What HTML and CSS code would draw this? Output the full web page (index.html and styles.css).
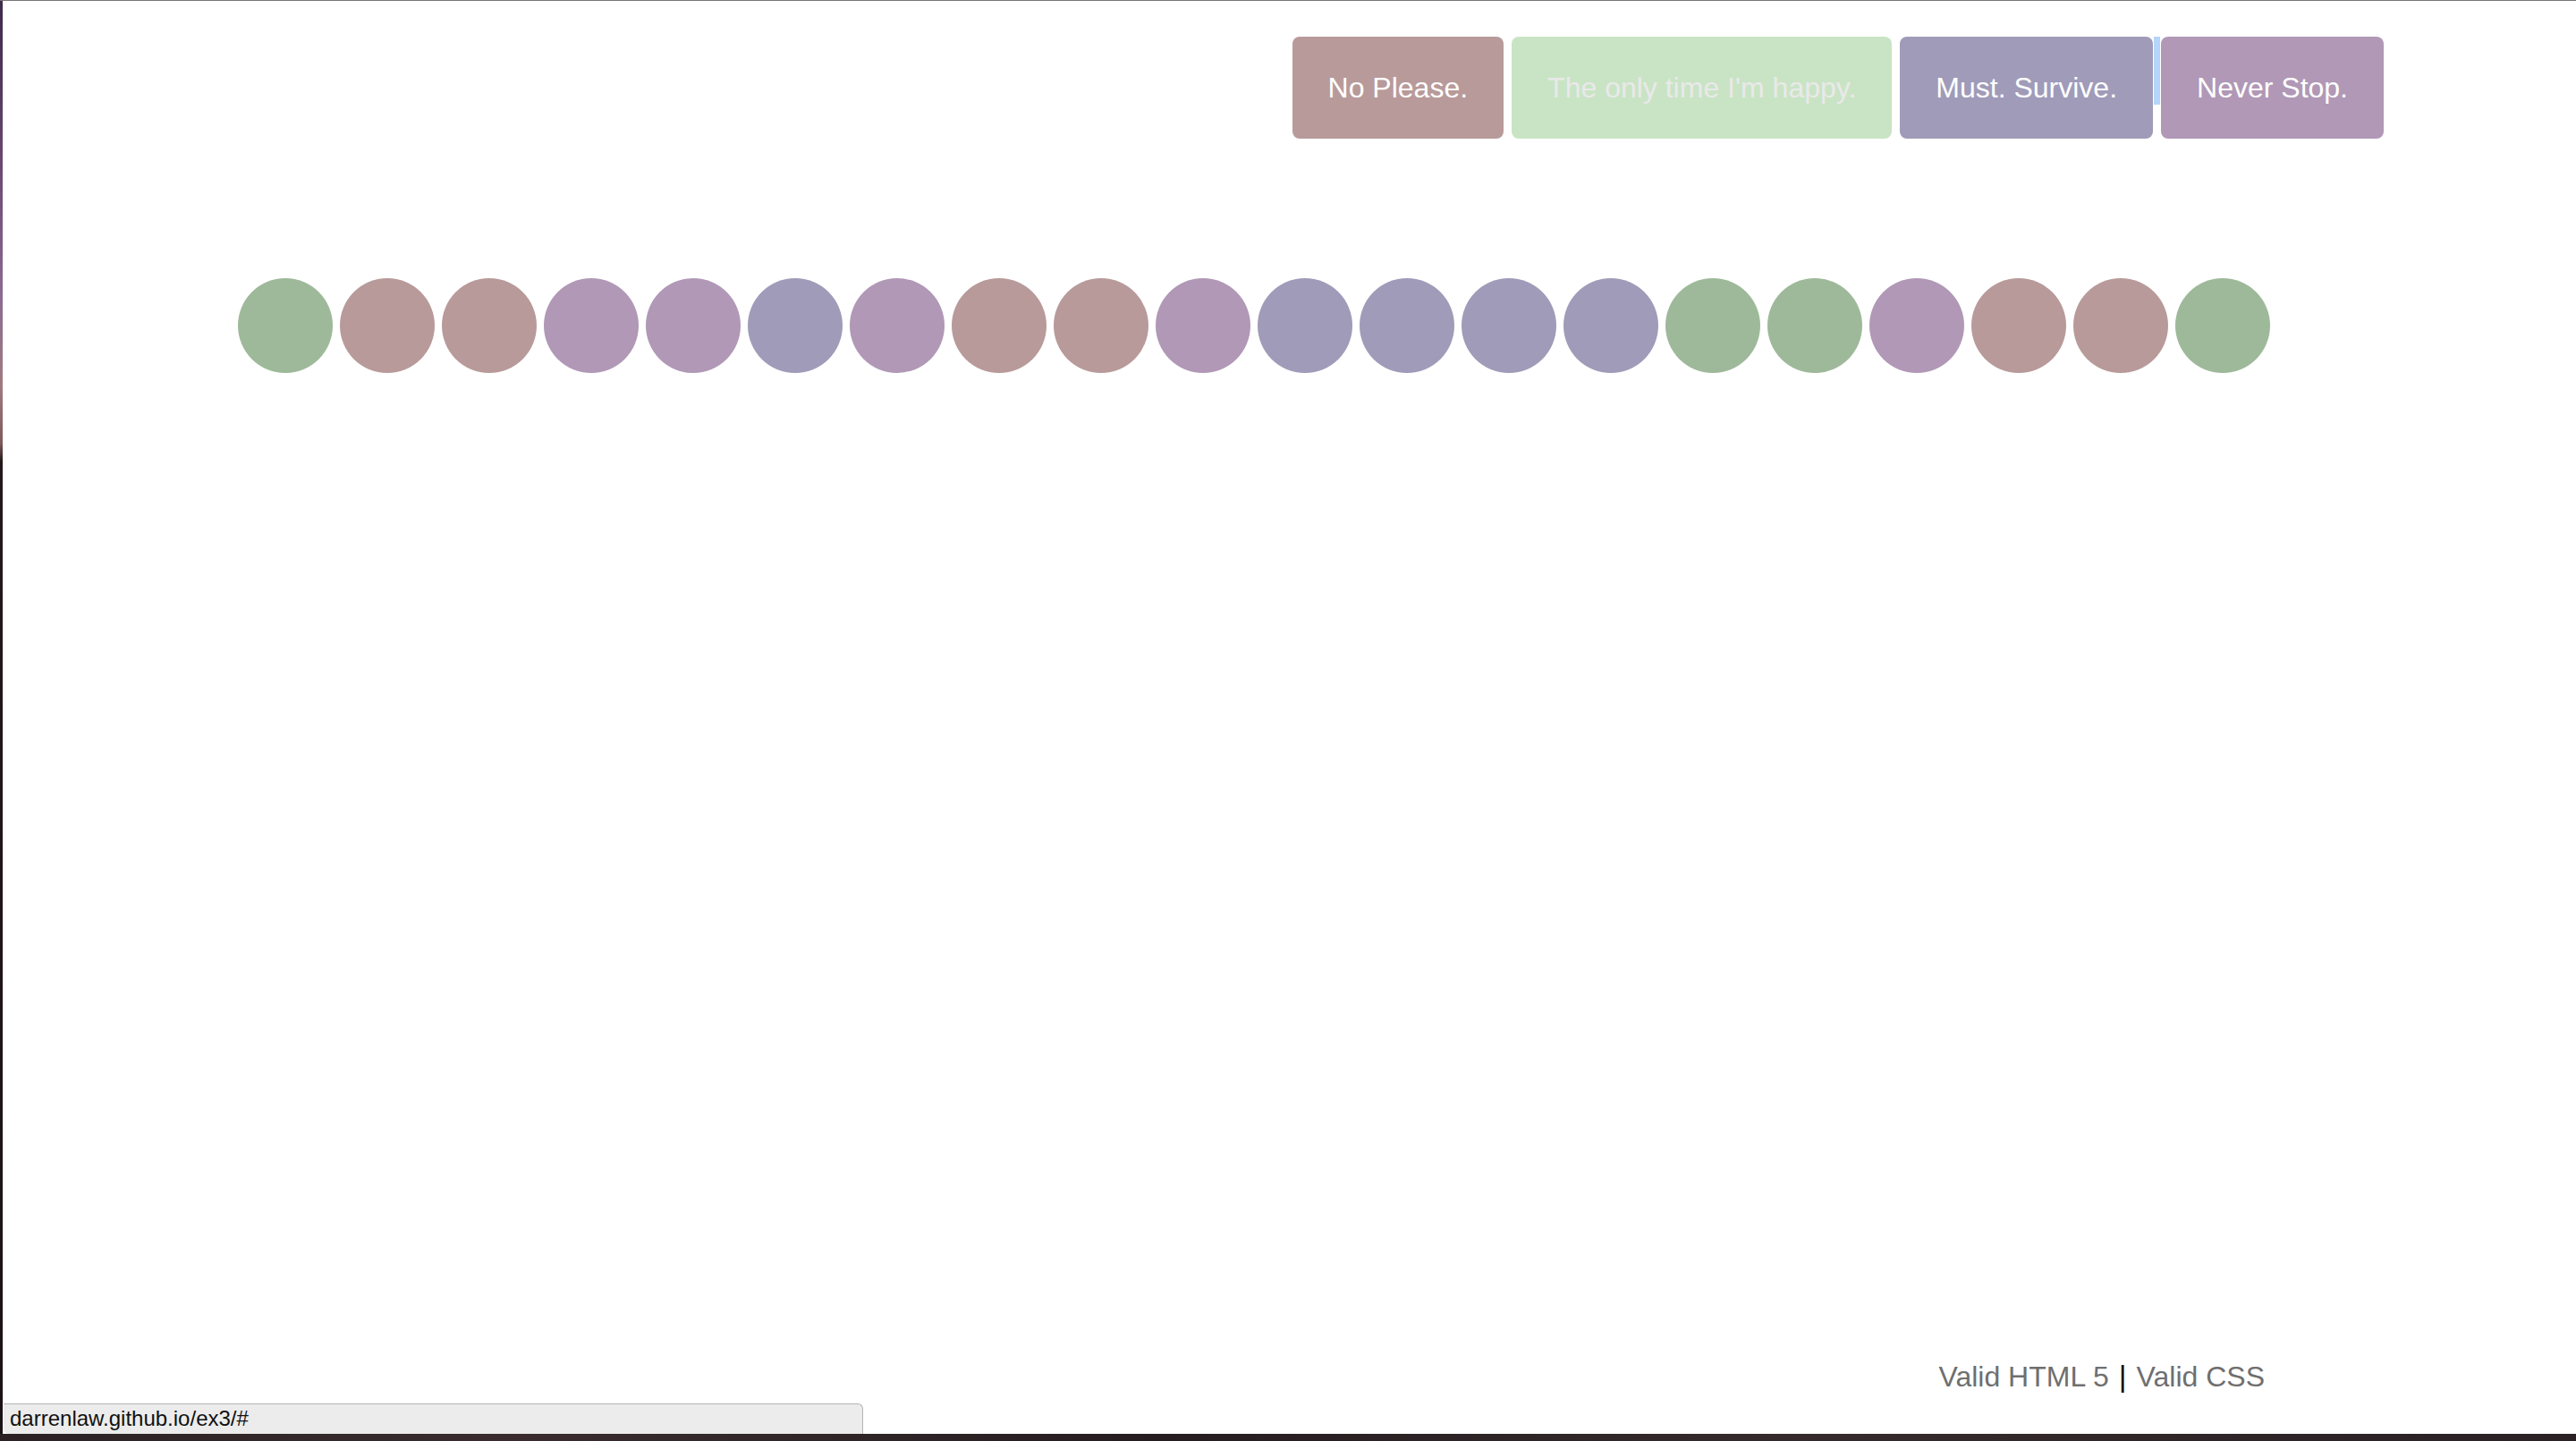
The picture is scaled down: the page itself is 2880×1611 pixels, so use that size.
FILE: index.html
```html
<!DOCTYPE html>
<html lang="en">
<head>
<meta charset="utf-8">
<title>ex3</title>
<link rel="stylesheet" href="styles.css">
</head>
<body>
<div class="screen">
  <div class="topline"></div>
  <div class="window-row">
    <div class="desk-edge"></div>
    <div class="page">
      <header class="nav">
        <a class="btn btn-rose" href="#">No Please.</a>
        <a class="btn btn-mint" href="#">The only time I'm happy.</a>
        <a class="btn btn-slate" href="#">Must. Survive.</a>
        <a class="btn btn-lilac btn-focus" href="#">Never Stop.</a>
      </header>
      <section class="dots">
        <span class="dot green"></span>
        <span class="dot rose"></span>
        <span class="dot rose"></span>
        <span class="dot lilac"></span>
        <span class="dot lilac"></span>
        <span class="dot slate"></span>
        <span class="dot lilac"></span>
        <span class="dot rose"></span>
        <span class="dot rose"></span>
        <span class="dot lilac"></span>
        <span class="dot slate"></span>
        <span class="dot slate"></span>
        <span class="dot slate"></span>
        <span class="dot slate"></span>
        <span class="dot green"></span>
        <span class="dot green"></span>
        <span class="dot lilac"></span>
        <span class="dot rose"></span>
        <span class="dot rose"></span>
        <span class="dot green"></span>
      </section>
      <footer class="validity">
        <a href="#">Valid HTML 5</a><span class="pipe">|</span><a href="#">Valid CSS</a>
      </footer>
      <div class="status">darrenlaw.github.io/ex3/#</div>
    </div>
  </div>
  <div class="desk-bottom"></div>
</div>
</body>
</html>
```

FILE: styles.css
```css
html, body {
  margin: 0;
  padding: 0;
}

body {
  background: #1c1416;
  font-family: "Liberation Sans", Arial, Helvetica, sans-serif;
}

.screen {
  width: 2880px;
  height: 1611px;
  display: flex;
  flex-direction: column;
  overflow: hidden;
}

.topline {
  height: 1px;
  background: #767676;
  flex: none;
}

.window-row {
  height: 1602px;
  display: flex;
  flex: none;
}

.desk-edge {
  width: 3px;
  flex: none;
  background: linear-gradient(#3e2b4a 0, #5a3d63 120px, #7c5a85 260px, #8a6c92 330px, #a07a80 430px, #7e5a5c 495px, #231819 515px, #1a1214 100%);
}

.page {
  position: relative;
  flex: 1;
  background: #ffffff;
  display: flex;
  flex-direction: column;
  padding-top: 40px;
}

.nav {
  display: flex;
  justify-content: flex-end;
  gap: 9px;
  padding-right: 215px;
}

.btn {
  position: relative;
  display: block;
  height: 114px;
  line-height: 114px;
  padding: 0 40px;
  border-radius: 8px;
  font-size: 32px;
  color: #ffffff;
  text-decoration: none;
  white-space: nowrap;
}

.btn-rose { background: #b89a9a; }
.btn-mint { background: #c9e4c4; color: #e9e9ea; }
.btn-slate { background: #a09bb8; }
.btn-lilac { background: #b098b6; }

.btn-focus::before {
  content: "";
  position: absolute;
  left: -8px;
  top: 0;
  width: 7px;
  height: 76px;
  background: #b3d6fa;
}

.dots {
  display: flex;
  gap: 8px;
  margin-top: 156px;
  padding-left: 263px;
}

.dot {
  width: 106px;
  height: 106px;
  border-radius: 50%;
  flex: none;
}

.dot.green { background: #9eb99a; }
.dot.rose { background: #b89a9a; }
.dot.lilac { background: #b098b6; }
.dot.slate { background: #a09bb8; }

.validity {
  margin-top: auto;
  display: flex;
  justify-content: flex-end;
  align-items: baseline;
  gap: 11px;
  padding-right: 348px;
  padding-bottom: 44px;
  font-size: 32px;
  line-height: 40px;
  color: #6f6f6f;
}

.validity a {
  color: #6f6f6f;
  text-decoration: none;
}

.validity .pipe {
  color: #111111;
  font-size: 34px;
}

.status {
  position: absolute;
  left: 1px;
  bottom: 0;
  width: 961px;
  height: 34px;
  box-sizing: border-box;
  background: #ececec;
  border-top: 1px solid #b4b4b4;
  border-right: 1px solid #b4b4b4;
  border-top-right-radius: 6px;
  border-bottom-left-radius: 6px;
  padding-left: 7px;
  font-size: 24px;
  line-height: 31px;
  color: #111111;
}

.desk-bottom {
  flex: none;
  height: 8px;
  background: linear-gradient(90deg, #2b2124 0, #3a2c2e 20%, #261d20 45%, #362a2c 70%, #2a2124 100%);
}
```
